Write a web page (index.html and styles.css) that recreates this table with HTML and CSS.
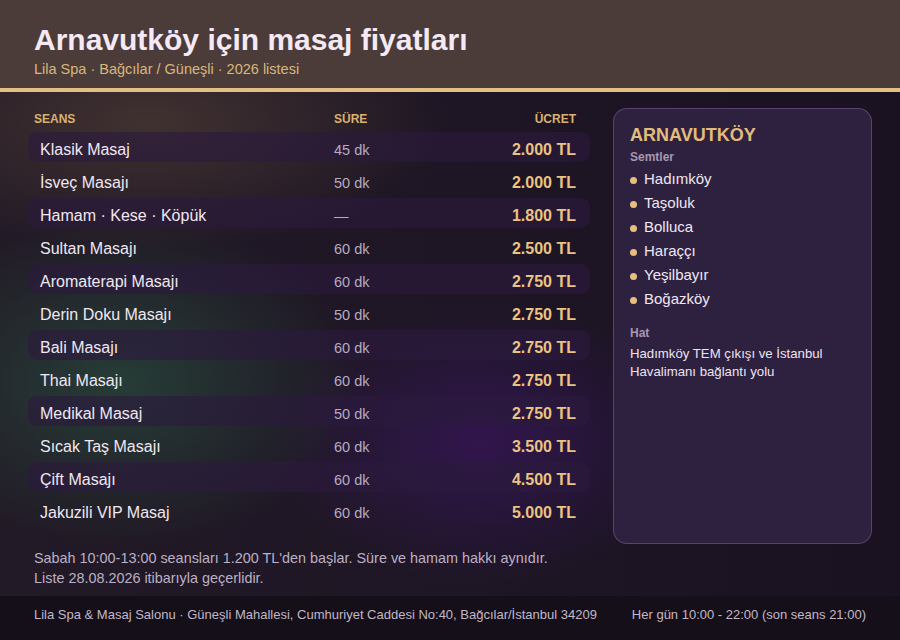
FILE: index.html
```html
<!DOCTYPE html>
<html lang="tr">
<head>
<meta charset="utf-8">
<title>Arnavutköy için masaj fiyatları</title>
<link rel="stylesheet" href="styles.css">
</head>
<body>
<div class="page">
  <header class="top">
    <h1 class="title">Arnavutköy için masaj fiyatları</h1>
    <div class="subtitle">Lila Spa · Bağcılar / Güneşli · 2026 listesi</div>
  </header>
  <div class="content">
    <div class="main">
      <section class="prices">
        <div class="thead">
          <span>SEANS</span><span>SÜRE</span><span class="right">ÜCRET</span>
        </div>
        <div class="row shade"><span class="name">Klasik Masaj</span><span class="dur">45 dk</span><span class="price">2.000 TL</span></div>
        <div class="row"><span class="name">İsveç Masajı</span><span class="dur">50 dk</span><span class="price">2.000 TL</span></div>
        <div class="row shade"><span class="name">Hamam · Kese · Köpük</span><span class="dur">—</span><span class="price">1.800 TL</span></div>
        <div class="row"><span class="name">Sultan Masajı</span><span class="dur">60 dk</span><span class="price">2.500 TL</span></div>
        <div class="row shade"><span class="name">Aromaterapi Masajı</span><span class="dur">60 dk</span><span class="price">2.750 TL</span></div>
        <div class="row"><span class="name">Derin Doku Masajı</span><span class="dur">50 dk</span><span class="price">2.750 TL</span></div>
        <div class="row shade"><span class="name">Bali Masajı</span><span class="dur">60 dk</span><span class="price">2.750 TL</span></div>
        <div class="row"><span class="name">Thai Masajı</span><span class="dur">60 dk</span><span class="price">2.750 TL</span></div>
        <div class="row shade"><span class="name">Medikal Masaj</span><span class="dur">50 dk</span><span class="price">2.750 TL</span></div>
        <div class="row"><span class="name">Sıcak Taş Masajı</span><span class="dur">60 dk</span><span class="price">3.500 TL</span></div>
        <div class="row shade"><span class="name">Çift Masajı</span><span class="dur">60 dk</span><span class="price">4.500 TL</span></div>
        <div class="row"><span class="name">Jakuzili VIP Masaj</span><span class="dur">60 dk</span><span class="price">5.000 TL</span></div>
      </section>
      <aside class="card">
        <h2 class="district">ARNAVUTKÖY</h2>
        <div class="label">Semtler</div>
        <ul class="areas">
          <li>Hadımköy</li>
          <li>Taşoluk</li>
          <li>Bolluca</li>
          <li>Haraççı</li>
          <li>Yeşilbayır</li>
          <li>Boğazköy</li>
        </ul>
        <div class="label hat">Hat</div>
        <p class="route">Hadımköy TEM çıkışı ve İstanbul Havalimanı bağlantı yolu</p>
      </aside>
    </div>
    <div class="note">
      <p>Sabah 10:00-13:00 seansları 1.200 TL'den başlar. Süre ve hamam hakkı aynıdır.</p>
      <p>Liste 28.08.2026 itibarıyla geçerlidir.</p>
    </div>
  </div>
  <footer class="bottom">
    <span>Lila Spa &amp; Masaj Salonu · Güneşli Mahallesi, Cumhuriyet Caddesi No:40, Bağcılar/İstanbul 34209</span>
    <span>Her gün 10:00 - 22:00 (son seans 21:00)</span>
  </footer>
</div>
</body>
</html>
```

FILE: styles.css
```css
* { box-sizing: border-box; }
html, body { margin: 0; padding: 0; }
body {
  width: 900px;
  height: 640px;
  overflow: hidden;
  background: #1b1320;
  font-family: "Liberation Sans", Arial, sans-serif;
}
.page {
  width: 900px;
  height: 640px;
  display: flex;
  flex-direction: column;
}
.top {
  height: 92px;
  background: #4b3c3a;
  border-bottom: 4px solid #e2bf83;
  padding: 23px 34px 0;
}
.title {
  margin: 0;
  font-size: 30px;
  line-height: 34px;
  font-weight: 700;
  color: #f4e9f4;
}
.subtitle {
  margin-top: 3px;
  font-size: 14.5px;
  line-height: 18px;
  color: #d8b77b;
}
.content {
  flex: 1;
  background:
    radial-gradient(ellipse 320px 220px at 120px 290px, rgba(42, 84, 66, 0.6), rgba(42, 84, 66, 0) 75%),
    radial-gradient(ellipse 280px 190px at 480px 350px, rgba(66, 22, 112, 0.55), rgba(66, 22, 112, 0) 75%),
    radial-gradient(ellipse 400px 170px at 150px 30px, rgba(86, 66, 56, 0.6), rgba(86, 66, 56, 0) 75%),
    linear-gradient(90deg, #221a26 0%, #1d1524 60%, #1a1220 100%);
}
.main {
  display: grid;
  grid-template-columns: 562px 259px;
  column-gap: 23px;
  padding: 16px 28px 0;
  align-items: start;
}
.prices {
  padding-top: 4px;
  display: flex;
  flex-direction: column;
  gap: 3px;
}
.thead {
  display: grid;
  grid-template-columns: 300px 1fr auto;
  padding: 0 14px 0 6px;
  font-size: 12px;
  line-height: 14px;
  font-weight: 700;
  color: #d9b171;
  margin-bottom: 3px;
}
.right { text-align: right; }
.row {
  display: grid;
  grid-template-columns: 294px 1fr auto;
  align-items: baseline;
  height: 30px;
  padding: 9px 14px 3px 12px;
  border-radius: 9px;
  line-height: 18px;
}
.row.shade { background: rgba(44, 26, 62, 0.62); }
.name { font-size: 16px; color: #f0e7f1; }
.dur { font-size: 14.5px; color: #b6abc0; }
.price { font-size: 16px; font-weight: 700; color: #ebc382; text-align: right; }
.card {
  height: 436px;
  background: #2e2140;
  border: 1px solid rgba(150, 120, 185, 0.4);
  border-radius: 14px;
  padding: 15px 17px 13px 16px;
}
.district {
  margin: 0;
  font-size: 18px;
  line-height: 22px;
  font-weight: 700;
  color: #e3bc7c;
}
.label {
  margin-top: 3px;
  font-size: 12px;
  line-height: 16px;
  font-weight: 700;
  color: #a797b2;
}
.label.hat { margin-top: 14px; }
.areas {
  list-style: none;
  margin: 2px 0 0;
  padding: 0;
}
.areas li {
  display: flex;
  align-items: center;
  gap: 7px;
  font-size: 15px;
  line-height: 24px;
  color: #f0e7f1;
}
.areas li::before {
  content: "";
  width: 7px;
  height: 7px;
  border-radius: 50%;
  background: #e6bf7f;
  margin-top: 2px;
}
.route {
  margin: 4px 0 0;
  font-size: 13.2px;
  line-height: 18px;
  color: #ece3ee;
}
.note {
  padding: 4px 34px 0;
  font-size: 14.4px;
  line-height: 20px;
  color: #bcb0c6;
}
.note p { margin: 0; }
.bottom {
  height: 44px;
  flex: none;
  background: #150f19;
  padding: 11px 34px 0;
  display: flex;
  justify-content: space-between;
  font-size: 13px;
  line-height: 16px;
  color: #c2b7c7;
}
```
